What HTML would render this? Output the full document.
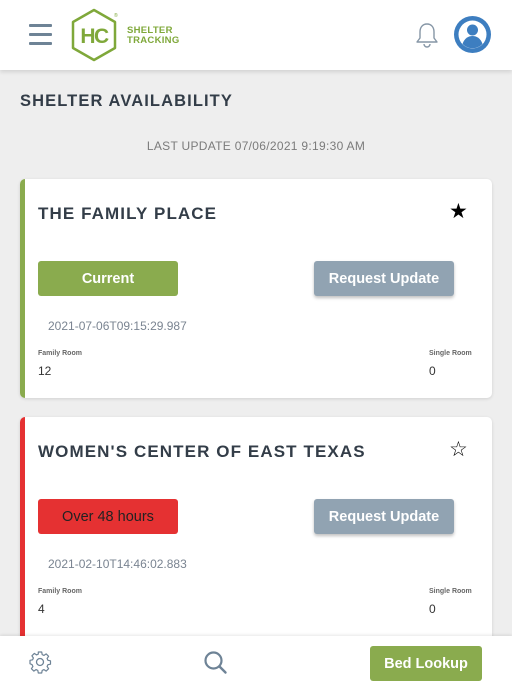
<!DOCTYPE html><html><head><style>
*{margin:0;padding:0;box-sizing:border-box}
body{width:512px;height:690px;overflow:hidden;background:#eeeeee;font-family:"Liberation Sans",sans-serif;position:relative}
.hdr{position:absolute;left:0;top:0;width:512px;height:70px;background:#fff;box-shadow:0 2px 4px rgba(0,0,0,.12);z-index:2}
.abs{position:absolute}
.card{position:absolute;left:20px;width:472px;background:#fff;border-radius:5px;box-shadow:0 1px 3px rgba(0,0,0,.12)}
.bar{position:absolute;left:0;top:0;bottom:0;width:5px;border-radius:5px 0 0 5px}
.ttl{position:absolute;left:18px;font-weight:bold;font-size:17px;color:#333d48;letter-spacing:1.1px}
.btn{position:absolute;width:140px;height:35px;border-radius:3px;color:#fff;font-size:14.5px;font-weight:bold;text-align:center;line-height:37px}
.ts{position:absolute;left:28px;font-size:12px;color:#7a8491}
.lab{position:absolute;font-size:7px;color:#666;font-weight:bold}
.val{position:absolute;font-size:12px;color:#333}
.ftr{position:absolute;left:0;top:636px;width:512px;height:54px;background:#fff;box-shadow:0 -1px 3px rgba(0,0,0,.1);z-index:2}
</style></head><body>
<div class="hdr">
 <div class="abs" style="left:29px;top:24px;width:23px;height:3px;background:#6e8396;border-radius:1px"></div>
 <div class="abs" style="left:29px;top:33px;width:23px;height:3px;background:#6e8396;border-radius:1px"></div>
 <div class="abs" style="left:29px;top:42px;width:23px;height:3px;background:#6e8396;border-radius:1px"></div>
 <svg class="abs" style="left:69px;top:8px" width="50" height="54" viewBox="0 0 50 54"><path d="M25 2 L46 14 L46 40 L25 52 L4 40 L4 14 Z" fill="none" stroke="#7fa83a" stroke-width="2.5" stroke-linejoin="round"/><text x="25" y="35" text-anchor="middle" font-family="Liberation Sans" font-weight="bold" font-size="21" fill="#7fa83a" letter-spacing="-1.5">HC</text><text x="45" y="9" font-size="5" fill="#7fa83a">®</text></svg>
 <div class="abs" style="left:127px;top:26px;font-size:9.5px;font-weight:bold;color:#7fa83a;line-height:10px;letter-spacing:.3px">SHELTER<br>TRACKING</div>
 <svg class="abs" style="left:414px;top:22px" width="26" height="28" viewBox="0 0 26 28"><path d="M13 2c-5 0-7 4-7 8v6l-3 4h20l-3-4v-6c0-4-2-8-7-8z" fill="none" stroke="#8696a6" stroke-width="1.4" stroke-linejoin="round"/><path d="M10 22a3 3 0 0 0 6 0" fill="none" stroke="#8696a6" stroke-width="1.4"/></svg>
 <svg class="abs" style="left:454px;top:16px" width="37" height="37" viewBox="0 0 37 37"><circle cx="18.5" cy="18.5" r="18.5" fill="#3d7ec0"/><circle cx="18.5" cy="18.5" r="14" fill="#fff"/><circle cx="18.5" cy="14" r="5.5" fill="#3d7ec0"/><path d="M8.5 28c2-6 6-8 10-8s8 2 10 8a14 14 0 0 1-20 0z" fill="#3d7ec0"/></svg>
</div>
<div class="abs" style="left:20px;top:92px;font-size:16.5px;font-weight:bold;color:#333d48;letter-spacing:1.1px">SHELTER AVAILABILITY</div>
<div class="abs" style="left:0;width:512px;text-align:center;top:139px;font-size:12px;color:#7b7b7b;letter-spacing:.3px">LAST UPDATE 07/06/2021 9:19:30 AM</div>

<div class="card" style="top:179px;height:219px">
 <div class="bar" style="background:#8aab4e"></div>
 <div class="ttl" style="top:25px">THE FAMILY PLACE</div>
 <div class="abs" style="left:429px;top:20px;font-size:21px;color:#000">★</div>
 <div class="btn" style="left:18px;top:82px;background:#8aab4e">Current</div>
 <div class="btn" style="left:294px;top:82px;background:#91a3b2;box-shadow:0 2px 3px rgba(0,0,0,.25)">Request Update</div>
 <div class="ts" style="top:140px">2021-07-06T09:15:29.987</div>
 <div class="lab" style="left:18px;top:171px">Family Room</div>
 <div class="lab" style="left:409px;top:171px">Single Room</div>
 <div class="val" style="left:18px;top:185px">12</div>
 <div class="val" style="left:409px;top:185px">0</div>
</div>

<div class="card" style="top:417px;height:260px">
 <div class="bar" style="background:#e53132"></div>
 <div class="ttl" style="top:25px">WOMEN'S CENTER OF EAST TEXAS</div>
 <div class="abs" style="left:429px;top:20px;font-size:21px;color:#000">☆</div>
 <div class="btn" style="left:18px;top:82px;background:#e53132;color:#222;font-weight:normal">Over 48 hours</div>
 <div class="btn" style="left:294px;top:82px;background:#91a3b2;box-shadow:0 2px 3px rgba(0,0,0,.25)">Request Update</div>
 <div class="ts" style="top:140px">2021-02-10T14:46:02.883</div>
 <div class="lab" style="left:18px;top:171px">Family Room</div>
 <div class="lab" style="left:409px;top:171px">Single Room</div>
 <div class="val" style="left:18px;top:185px">4</div>
 <div class="val" style="left:409px;top:185px">0</div>
</div>

<div class="ftr">
 <svg class="abs" style="left:28px;top:14px" width="24" height="24" viewBox="0 0 24 24"><circle cx="12" cy="12" r="3.5" fill="none" stroke="#6e8396" stroke-width="1.3"/><path d="M10.3 2h3.4l.5 2.6 1.8.8 2.2-1.5 2.4 2.4-1.5 2.2.8 1.8 2.6.5v3.4l-2.6.5-.8 1.8 1.5 2.2-2.4 2.4-2.2-1.5-1.8.8-.5 2.6h-3.4l-.5-2.6-1.8-.8-2.2 1.5-2.4-2.4 1.5-2.2-.8-1.8L2 13.7v-3.4l2.6-.5.8-1.8-1.5-2.2 2.4-2.4 2.2 1.5 1.8-.8z" fill="none" stroke="#6e8396" stroke-width="1.2" stroke-linejoin="round"/></svg>
 <svg class="abs" style="left:203px;top:14px" width="26" height="26" viewBox="0 0 26 26"><circle cx="10.5" cy="10.5" r="8" fill="none" stroke="#6e8396" stroke-width="2.2"/><path d="M16.5 16.5l6 6" stroke="#6e8396" stroke-width="2.4" stroke-linecap="round"/></svg>
 <div class="btn" style="left:370px;top:10px;width:112px;height:35px;background:#8aab4e;font-size:14.5px">Bed Lookup</div>
</div>
</body></html>
